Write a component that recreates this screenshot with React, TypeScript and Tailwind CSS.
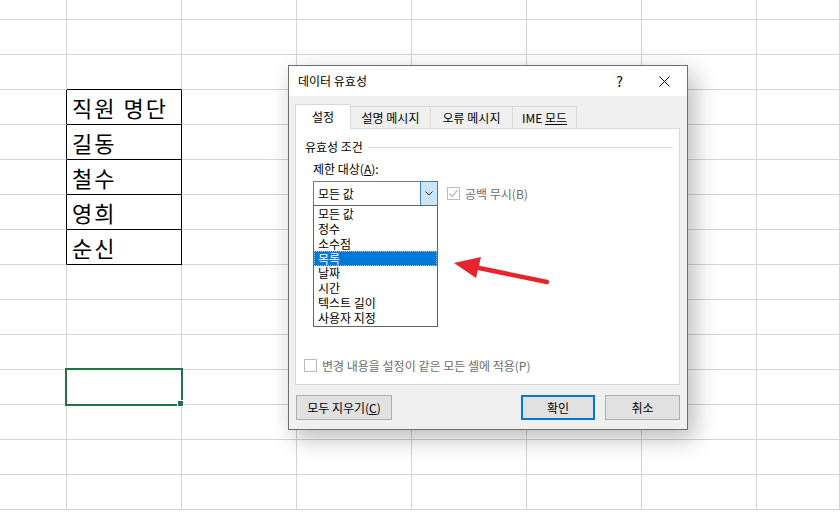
const FONT = { fontFamily: "'Noto Sans CJK KR', 'Noto Sans', sans-serif" };

const ROWS = 15;
const COLS = 8;

const names: Record<number, string> = {
  3: "직원 명단",
  4: "길동",
  5: "철수",
  6: "영희",
  7: "순신",
};

const options = ["모든 값", "정수", "소수점", "목록", "날짜", "시간", "텍스트 길이", "사용자 지정"];

function Cell({ r, c }: { r: number; c: number }) {
  const inTable = c === 1 && r >= 3 && r <= 7;
  const rightBlack = (c === 0 || c === 1) && r >= 3 && r <= 7;
  const bottomBlack = c === 1 && r >= 2 && r <= 7;
  return (
    <div
      className={
        "relative border-r border-b " +
        (r === 0 ? "h-[20px] " : "h-[35px] ") +
        (rightBlack ? "border-r-black " : "border-r-[#d4d4d4] ") +
        (bottomBlack ? "border-b-black" : "border-b-[#d4d4d4]")
      }
    >
      {inTable && (
        <div className="h-full flex items-center pl-[5px] text-[22px] tracking-[2px] leading-none text-black">
          {names[r]}
        </div>
      )}
      {c === 1 && r === 11 && (
        <div className="absolute z-10 -left-[2px] -top-[2px] w-[118px] h-[38px] border-2 border-[#217346]">
          <div className="absolute -right-[3px] -bottom-[3px] w-[7px] h-[7px] bg-[#217346] border border-white" />
        </div>
      )}
    </div>
  );
}

function Check({ className = "" }: { className?: string }) {
  return (
    <div className={"w-[13px] h-[13px] border border-[#bcbcbc] bg-white flex items-center justify-center " + className}>
      <svg width="11" height="11" viewBox="0 0 11 11">
        <polyline points="1.5,5.5 4.2,8.5 9.5,2" fill="none" stroke="#bcbcbc" strokeWidth="1.2" />
      </svg>
    </div>
  );
}

function Dialog() {
  return (
    <div
      className="absolute z-20 left-[288px] top-[65px] w-[400px] h-[365px] border border-[#707070] bg-[#f0f0f0] flex flex-col text-[12px] text-black shadow-[6px_8px_22px_rgba(0,0,0,0.28)]"
      style={FONT}
    >
      <div className="h-[30px] bg-white flex items-center shrink-0">
        <div className="flex-1 pl-[9px] leading-none">데이터 유효성</div>
        <div className="w-[45px] text-center text-[14px] leading-none">?</div>
        <div className="w-[45px] flex justify-center">
          <svg width="11" height="11" viewBox="0 0 11 11">
            <path d="M0.5 0.5L10.5 10.5M10.5 0.5L0.5 10.5" stroke="#000" strokeWidth="1" />
          </svg>
        </div>
      </div>

      <div className="flex-1 flex flex-col pl-[6px] pr-[7px] pt-[8px] pb-[9px]">
        <div className="flex items-end h-[24px] relative z-10">
          <div className="w-[56px] h-[25px] -mb-px bg-white border border-b-0 border-[#d9d9d9] flex items-center justify-center leading-none">
            설정
          </div>
          <div className="w-[80px] h-[22px] border-t border-r border-[#d9d9d9] flex items-center justify-center leading-none">
            설명 메시지
          </div>
          <div className="w-[82px] h-[22px] border-t border-r border-[#d9d9d9] flex items-center justify-center leading-none">
            오류 메시지
          </div>
          <div className="w-[64px] h-[22px] border-t border-r border-[#d9d9d9] flex items-center justify-center leading-none">
            <span>
              IME <span className="underline">모드</span>
            </span>
          </div>
        </div>

        <div className="w-[385px] h-[257px] bg-white border border-[#d9d9d9] flex flex-col pl-[9px] pt-[10px]">
          <div className="flex items-center h-[16px]">
            <span className="leading-none">유효성 조건</span>
            <div className="flex-1 ml-[5px] mr-[6px] h-px bg-[#dcdcdc]" />
          </div>
          <div className="ml-[8px] mt-[8px] h-[14px] leading-none">
            제한 대상(<span className="underline">A</span>):
          </div>
          <div className="flex items-center ml-[8px] mt-[4px]">
            <div className="relative w-[125px] h-[25px] border border-[#7a7a7a] bg-white flex items-center">
              <span className="pl-[4px] flex-1 leading-none">모든 값</span>
              <div className="w-[18px] h-[25px] -my-px -mr-px border border-[#3c7fb1] bg-[#cce4f7] flex items-center justify-center">
                <svg width="8" height="5" viewBox="0 0 8 5">
                  <polyline points="0.5,0.5 4,4 7.5,0.5" fill="none" stroke="#333" strokeWidth="1" />
                </svg>
              </div>
              <div className="absolute left-[-1px] top-[23px] w-[125px] h-[122px] border border-[#646464] bg-white flex flex-col py-px">
                {options.map((o, i) => (
                  <div
                    key={o}
                    className={
                      "h-[15px] pl-[4px] flex items-center leading-none " +
                      (i === 3 ? "bg-[#0078d7] text-white outline-1 outline-dotted outline-[#9ac8ee] -outline-offset-1" : "")
                    }
                  >
                    {o}
                  </div>
                ))}
              </div>
            </div>
            <Check className="ml-[9px]" />
            <span className="ml-[5px] text-[#6d6d6d] leading-none">공백 무시(B)</span>
          </div>
          <div className="flex-1" />
          <div className="flex items-center mb-[12px] -ml-[1px]">
            <div className="w-[13px] h-[13px] border border-[#bcbcbc] bg-white" />
            <span className="ml-[5px] text-[#6d6d6d] leading-none">변경 내용을 설정이 같은 모든 셀에 적용(P)</span>
          </div>
        </div>

        <div className="flex-1" />
        <div className="flex items-center">
          <div className="ml-px w-[96px] h-[25px] border border-[#adadad] bg-[#e1e1e1] flex items-center justify-center leading-none">
            모두 지우기(<span className="underline">C</span>)
          </div>
          <div className="flex-1" />
          <div className="w-[74px] h-[25px] border-2 border-[#0078d7] bg-[#e1e1e1] flex items-center justify-center leading-none">
            확인
          </div>
          <div className="ml-[10px] w-[75px] h-[25px] border border-[#adadad] bg-[#e1e1e1] flex items-center justify-center leading-none">
            취소
          </div>
        </div>
      </div>
    </div>
  );
}

export default function App() {
  return (
    <div className="relative w-[840px] h-[529px] overflow-hidden bg-white" style={FONT}>
      <div className="grid grid-cols-[67px_repeat(6,115px)_83px]">
        {Array.from({ length: ROWS }).map((_, r) =>
          Array.from({ length: COLS }).map((_, c) => <Cell key={r + "-" + c} r={r} c={c} />)
        )}
      </div>
      <Dialog />
      <svg className="absolute z-30 left-0 top-0" width="840" height="529" viewBox="0 0 840 529">
        <line x1="547" y1="282" x2="474" y2="267" stroke="#e6242c" strokeWidth="4.5" strokeLinecap="round" />
        <polygon points="454,263 481,257 476,278" fill="#e6242c" />
      </svg>
    </div>
  );
}
